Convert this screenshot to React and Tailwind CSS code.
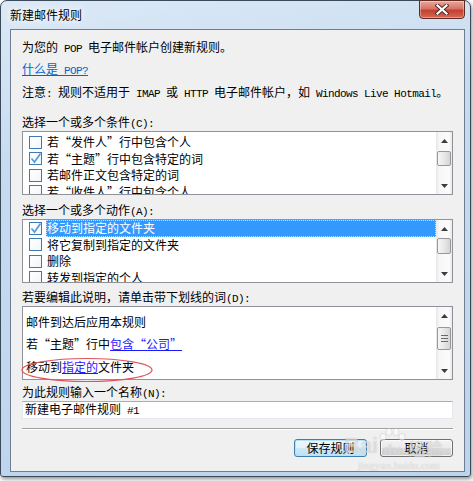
import React from 'react';

// half-width latin in the dialog font (SimSun style, 6px per char)
const M = ({ children }) => (
  <span className="font-['Liberation_Mono',monospace] text-[11px] tracking-[-0.6px]">{children}</span>
);

function Arrow({ up }) {
  return (
    <svg width="7" height="4" viewBox="0 0 7 4">
      <path d={up ? 'M0 4 L3.5 0 L7 4 Z' : 'M0 0 L7 0 L3.5 4 Z'} fill="#3c3c3c" />
    </svg>
  );
}

function ScrollBar({ thumbTop, thumbH, grip }) {
  return (
    <div className="w-[16px] h-full flex flex-col bg-[linear-gradient(to_right,#e6e6e6,#f7f7f7_20%,#fbfbfb_80%,#e8e8e8)]">
      <div className="h-[17px] flex items-center justify-center">
        <Arrow up />
      </div>
      <div className="flex-1 relative">
        <div
          className="mx-[1px] rounded-[2px] border border-[#979797] bg-[linear-gradient(to_right,#f6f6f6,#e8e8e8_50%,#d4d4d4)] flex flex-col items-center justify-center gap-[2px]"
          style={{ marginTop: thumbTop, height: thumbH }}
        >
          {grip && (
            <>
              <div className="w-[7px] h-[1px] bg-[#6a6a6a]" />
              <div className="w-[7px] h-[1px] bg-[#6a6a6a]" />
              <div className="w-[7px] h-[1px] bg-[#6a6a6a]" />
            </>
          )}
        </div>
      </div>
      <div className="h-[17px] flex items-center justify-center">
        <Arrow />
      </div>
    </div>
  );
}

function Row({ checked, selected, children }) {
  return (
    <div className="flex items-center h-[16.5px] shrink-0">
      <div className="ml-[6px] w-[13px] h-[13px] border border-[#3f7ab5] bg-[linear-gradient(135deg,#ffffff,#f2f6fa)] shrink-0 relative">
        {checked && (
          <svg className="absolute left-[-1px] top-[-2px]" width="14" height="14" viewBox="0 0 14 14">
            <path d="M2.5 7.5 L5.5 11 L11.5 2.5" fill="none" stroke="#5b9ad9" strokeWidth="1.7" />
          </svg>
        )}
      </div>
      <div
        className={
          selected
            ? 'ml-[4px] pl-[1px] flex-1 h-full flex items-center bg-[#3399ff] text-white outline outline-1 outline-dotted outline-[#c8e0ff] -outline-offset-1'
            : 'ml-[4px] pl-[1px] flex-1 h-full flex items-center'
        }
      >
        <span className="leading-[16px] whitespace-nowrap">{children}</span>
      </div>
    </div>
  );
}

function ListBox({ rows, pt, thumbTop, thumbH }) {
  return (
    <div className="mt-[1px] h-[64px] border border-[#8f9399] bg-white flex">
      <div className="flex-1 flex flex-col overflow-hidden" style={{ paddingTop: pt }}>
        {rows.map((r, i) => (
          <Row key={i} checked={r.checked} selected={r.selected}>
            {r.text}
          </Row>
        ))}
      </div>
      <ScrollBar thumbTop={thumbTop} thumbH={thumbH} />
    </div>
  );
}

function Label({ children, mt }) {
  return (
    <div className="h-[16px] leading-[16px] whitespace-nowrap" style={{ marginTop: mt }}>
      {children}
    </div>
  );
}

const conditions = [
  { text: '若“发件人”行中包含个人' },
  { text: '若“主题”行中包含特定的词', checked: true },
  { text: '若邮件正文包含特定的词' },
  { text: '若“收件人”行中包含个人' },
];

const actions = [
  { text: '移动到指定的文件夹', checked: true, selected: true },
  { text: '将它复制到指定的文件夹' },
  { text: '删除' },
  { text: '转发到指定的个人' },
];

export default function App() {
  return (
    <div className="w-[473px] h-[481px] bg-white relative overflow-hidden font-['Noto_Sans_CJK_SC',sans-serif] text-[12px] text-black">
      <div className="w-[471px] h-[477px] border border-[#3b4a5a] rounded-t-[7px] rounded-b-[3px] bg-[linear-gradient(170deg,#dce9f6,#c6dbf0_30%,#bcd4ec)] shadow-[1px_2px_4px_rgba(0,0,0,0.45)] flex flex-col">
        {/* title bar */}
        <div className="h-[28px] flex items-start shrink-0">
          <div className="ml-[9px] mt-[6px] h-[16px] leading-[16px] [text-shadow:0_0_6px_#ffffff,0_0_10px_#ffffff]">
            新建邮件规则
          </div>
          <div className="ml-auto mr-[5px] -mt-[1px] w-[46px] h-[19px] rounded-b-[4px] border border-[#5e2a22] bg-[linear-gradient(#e9a99a,#d47466_45%,#c4402f_55%,#d26a56)] shadow-[inset_0_0_0_1px_rgba(255,255,255,0.35)] flex items-center justify-center">
            <svg width="14" height="11" viewBox="0 0 14 11">
              <path d="M2.5 1.5 L11.5 9.5 M11.5 1.5 L2.5 9.5" stroke="#4a2a24" strokeWidth="4" strokeLinecap="square" />
              <path d="M2.5 1.5 L11.5 9.5 M11.5 1.5 L2.5 9.5" stroke="#ffffff" strokeWidth="2.2" strokeLinecap="square" />
            </svg>
          </div>
        </div>

        {/* client area */}
        <div className="flex-1 ml-[9px] mr-[5px] mb-[4px] border border-[#6e7e90] bg-[#f0f0f0] flex flex-col px-[11px]">
          <Label mt={9}>
            为您的<M>{' POP '}</M>电子邮件帐户创建新规则。
          </Label>
          <Label mt={6}>
            <span className="text-[#0066cc] underline">
              什么是<M>{' POP?'}</M>
            </span>
          </Label>
          <Label mt={7}>
            注意<M>{': '}</M>规则不适用于<M>{' IMAP '}</M>或<M>{' HTTP '}</M>电子邮件帐户，如<M>{' Windows Live Hotmail'}</M>。
          </Label>

          <Label mt={14}>
            选择一个或多个条件<M>(C):</M>
          </Label>
          <ListBox rows={conditions} pt={2} thumbTop={2} thumbH={15} />

          <Label mt={7}>
            选择一个或多个动作<M>(A):</M>
          </Label>
          <ListBox rows={actions} pt={0} thumbTop={1} thumbH={16} />

          <Label mt={6}>
            若要编辑此说明，请单击带下划线的词<M>(D):</M>
          </Label>
          <div className="mt-[1px] h-[74px] border border-[#8f9399] bg-white flex">
            <div className="flex-1 flex flex-col pl-[3px] pt-[7px]">
              <div className="h-[16px] leading-[16px]">邮件到达后应用本规则</div>
              <div className="h-[16px] leading-[16px] mt-[6px]">
                若“主题”行中<span className="text-[#1a1aff] underline">包含“公司”</span>
              </div>
              <div className="h-[16px] leading-[16px] mt-[7px]">
                移动到<span className="text-[#1a1aff] underline">指定的</span>文件夹
              </div>
            </div>
            <ScrollBar thumbTop={3} thumbH={23} grip />
          </div>

          <Label mt={4}>
            为此规则输入一个名称<M>(N):</M>
          </Label>
          <div className="mt-[1px] h-[18px] border border-[#e3e9ef] border-t-[#abadb3] bg-white flex items-center pl-[2px]">
            <span className="leading-[16px]">
              新建电子邮件规则<M>{' #1'}</M>
            </span>
          </div>

          <div className="mt-[9px] h-[2px] border-t border-[#a0a0a0] border-b border-b-white" />

          <div className="mt-[9px] flex justify-end gap-[13px]">
            <div className="w-[73px] h-[18px] rounded-[3px] border border-[#3c7fb1] shadow-[inset_0_0_0_1px_#b6e3fa] bg-[linear-gradient(#eef7fd,#e3f2fb_50%,#cfe9f7_50%,#bfe0f3)] flex items-center justify-center">
              <span className="leading-[16px]">保存规则</span>
            </div>
            <div className="w-[73px] h-[18px] rounded-[3px] border border-[#707070] shadow-[inset_0_0_0_1px_rgba(255,255,255,0.7)] bg-[linear-gradient(#f2f2f2,#ebebeb_50%,#dddddd_50%,#cfcfcf)] flex items-center justify-center">
              <span className="leading-[16px]">取消</span>
            </div>
          </div>
        </div>
      </div>

      {/* red annotation ellipse */}
      <svg className="absolute left-[20px] top-[356px]" width="134" height="28" viewBox="0 0 134 28">
        <ellipse cx="67" cy="14" rx="65" ry="11.5" fill="none" stroke="#e0525c" strokeWidth="1.2" />
      </svg>

      {/* baidu jingyan watermark */}
      <div className="absolute left-[344px] top-[428px] flex items-end text-white/45 [text-shadow:0_0_1px_rgba(150,150,150,0.5)] pointer-events-none">
        <span className="font-['Liberation_Sans',sans-serif] font-bold text-[22px] leading-[24px]">Bai</span>
        <div className="flex flex-col items-center -ml-[1px]">
          <svg width="30" height="14" viewBox="0 0 30 14">
            <g fill="rgba(255,255,255,0.5)" stroke="rgba(170,170,170,0.5)" strokeWidth="0.6">
              <ellipse cx="6" cy="9" rx="3" ry="3.6" />
              <ellipse cx="12" cy="4" rx="3" ry="3.6" />
              <ellipse cx="19" cy="4" rx="3" ry="3.6" />
              <ellipse cx="25" cy="9" rx="3" ry="3.6" />
            </g>
          </svg>
          <span className="font-['Liberation_Sans',sans-serif] font-bold text-[15px] leading-[16px]">du</span>
        </div>
        <span className="font-bold text-[17px] leading-[20px] ml-[1px]">经验</span>
      </div>
      <div className="absolute left-[358px] top-[459px] font-['Liberation_Serif',serif] text-[11px] leading-[12px] text-white/60 [text-shadow:0_0_1px_rgba(150,150,150,0.6)] pointer-events-none">
        jingyan.baidu.com
      </div>
    </div>
  );
}
